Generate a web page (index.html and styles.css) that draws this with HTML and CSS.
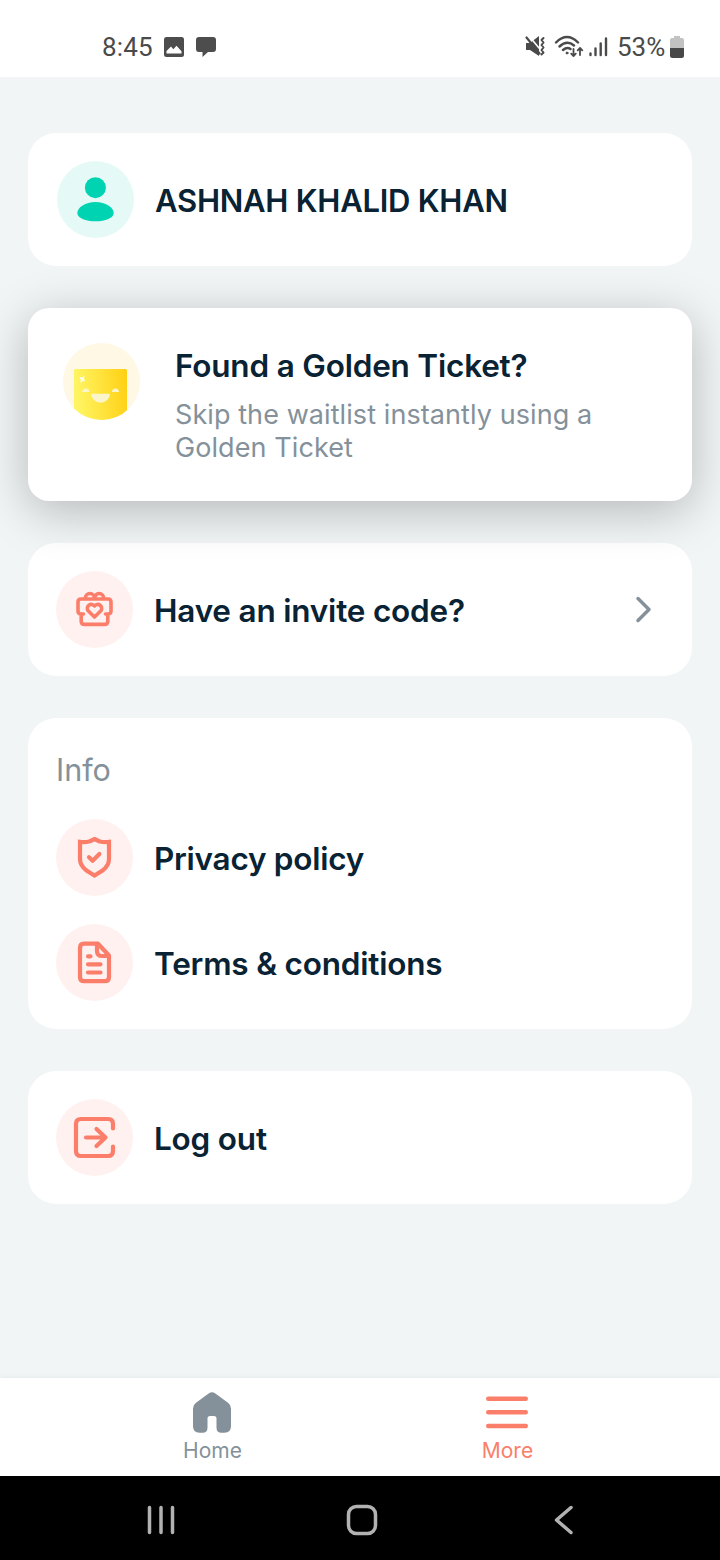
FILE: index.html
```html
<!DOCTYPE html>
<html lang="en">
<head>
<meta charset="utf-8">
<title>More</title>
<link rel="stylesheet" href="styles.css">
</head>
<body>
<div class="screen">
  <header class="status">
    <div class="status-left">
      <span class="clock">8:45</span>
      <svg class="st-photo" width="20" height="20" viewBox="0 0 20 20"><rect width="20" height="20" rx="2.500" fill="#4d4d4d"/><path d="M2.500 16.500v-2.500l4.500-4.500 2.300 2.800 3.200-3.500 5 5.500v2.200z" fill="#fff"/></svg>
      <svg class="st-chat" width="20" height="20" viewBox="0 0 20 20"><path d="M3 0h14q3 0 3 3v9q0 3-3 3h-5l-5.500 5v-5H3q-3 0-3-3V3q0-3 3-3z" fill="#4d4d4d"/></svg>
    </div>
    <div class="status-right">
      <svg width="84" height="24" viewBox="0 0 84 24" fill="none" stroke="#4a4a4a" stroke-width="2" stroke-linecap="round" stroke-linejoin="round">
        <path d="M1 8h4l9-7v20l-9-6H1z" fill="#4a4a4a" stroke="none"/>
        <path d="M4 1l10 12" stroke="#fff" stroke-width="1.600"/>
        <path d="M1.500 2.500l13 16" stroke-width="2.200"/>
        <path d="M18.500 3l-2 2 2 2.500-2 2.500 2 2.500-2 2.500 2 2.500-2 2" stroke-width="2"/>
        <path d="M31 7.500Q42-3.500 53 7.500M34.500 11.500Q42 4.500 49 10.500M38 15Q42 11.500 45.500 14" stroke-width="2.400"/>
        <circle cx="42" cy="18" r="1" fill="#4a4a4a" stroke-width="1"/>
        <path d="M48.500 14v7m-2.300-2.300l2.300 2.300 2.300-2.300M55 20v-7m-2.300 2.300L55 13l2.300 2.300" stroke-width="1.800"/>
        <path d="M65.500 18.500v1.500M70.500 13.500v6.500M75.700 8.500v11.500M81 3.500v16.500" stroke-width="2.400"/>
      </svg>
      <span class="percent">53%</span>
      <svg class="battery" width="14" height="22" viewBox="0 0 14 22"><path d="M4 0h6v2h2q2 0 2 2v8H0V4q0-2 2-2h2z" fill="#c2c2c2"/><path d="M0 12h14v7.500q0 2.500-2.500 2.500h-9Q0 22 0 19.500z" fill="#484848"/></svg>
    </div>
  </header>

  <main class="content">
    <section class="card row profile">
      <svg class="icon" viewBox="0 0 77 77"><circle cx="38.500" cy="38.500" r="38.500" fill="#e5faf7"/><circle cx="38.400" cy="26.700" r="10.500" fill="#00d3b2"/><path d="M38.500 41c10 0 18.200 5.500 18.200 11 0 5-8.200 8.300-18.200 8.300S20.300 57 20.300 52c0-5.500 8.200-11 18.200-11z" fill="#00d3b2"/></svg>
      <span class="title name">ASHNAH KHALID KHAN</span>
    </section>

    <section class="card golden">
      <svg class="icon" viewBox="0 0 77 77">
        <defs>
          <linearGradient id="gold" x1="0" y1="0.100" x2="1" y2="0"><stop offset="0" stop-color="#fff563"/><stop offset="1" stop-color="#ffd013"/></linearGradient>
          <clipPath id="disc"><circle cx="38.500" cy="38.500" r="38.500"/></clipPath>
        </defs>
        <circle cx="38.500" cy="38.500" r="38.500" fill="#fff8e5"/>
        <rect x="11" y="26" width="53" height="58" rx="1.500" fill="url(#gold)" clip-path="url(#disc)"/>
        <path d="M16.300 33.800l2.600.6 2.600-1.600-.6 3 1.300 2.400-2.500-.2-2.400 1.900.4-3z" fill="#fffde8"/>
        <path d="M19.300 49a3.500 3.500 0 0 1 7 0zM49 49a3.500 3.500 0 0 1 7 0zM28 50.700h19a9.500 9 0 0 1-19 0z" fill="#fbf5cb"/>
      </svg>
      <div class="golden-text">
        <span class="title found">Found a Golden Ticket?</span>
        <p class="sub">Skip the waitlist instantly using a<br>Golden Ticket</p>
      </div>
    </section>

    <section class="card row">
      <svg class="icon line" viewBox="0 0 77 77"><circle class="disc" cx="38.500" cy="38.500" r="38.500"/>
        <g stroke-width="3.600"><path d="M27.500 43H25Q22 43 22 40V31Q22 28 25 28H52Q55 28 55 31V40Q55 43 52 43H49.500M25.200 43V50.200Q25.200 53.400 28.400 53.400H48.600Q51.800 53.400 51.800 50.200V43M29.300 27.500a4.600 5 0 0 1 9.200 0a4.600 5 0 0 1 9.200 0"/><path d="M38.500 46l-6.400-6.200a4 4 0 0 1 6.400-4.800 4 4 0 0 1 6.400 4.800z"/></g></svg>
      <span class="title invite">Have an invite code?</span>
      <svg class="chevron" width="18" height="28" viewBox="0 0 18 28"><path d="M3 2.500L14 13.500 3 24.500" fill="none" stroke="#84919a" stroke-width="3.500" stroke-linecap="round" stroke-linejoin="round"/></svg>
    </section>

    <section class="card info">
      <h2>Info</h2>
      <div class="row">
        <svg class="icon line" viewBox="0 0 77 77"><circle class="disc" cx="38.500" cy="38.500" r="38.500"/><path class="shield" d="M38.500 20L43 22.200Q48 23.600 53 22.900V40Q53 46.500 46.500 51.500L38.500 56.500 30.500 51.500Q24 46.500 24 40V22.900Q29 23.600 34 22.200z"/><path d="M33 38.300l3.600 3.400 6.800-6.700"/></svg>
        <span class="title privacy">Privacy policy</span>
      </div>
      <div class="row">
        <svg class="icon line" viewBox="0 0 77 77"><circle class="disc" cx="38.500" cy="38.500" r="38.500"/><path d="M28 19.700H42L53 31.500V53Q53 57.200 49 57.200H28Q24 57.200 24 53V24Q24 19.700 28 19.700zM41 20.500V27Q41 32 46 32H53M32 32.300h2.500M32 40.300h12.500M32 48.500h12.500"/></svg>
        <span class="title terms">Terms &amp; conditions</span>
      </div>
    </section>

    <section class="card row">
      <svg class="icon line" viewBox="0 0 77 77"><circle class="disc" cx="38.500" cy="38.500" r="38.500"/><path d="M57 29.500V25Q57 20 52 20H25Q20 20 20 25V52Q20 57 25 57H52Q57 57 57 52V47.500M30 38.500H49.500M40.500 30l9 8.500-9 8.500"/></svg>
      <span class="title logout">Log out</span>
    </section>
  </main>

  <nav class="tabs">
    <div class="tab">
      <svg width="42" height="42" viewBox="0 0 42 42"><path d="M24 1.300L37 10.800Q40 13 40 16.500V34Q40 40.700 33.500 40.700H30.500Q25.500 40.700 25.500 35.700V26.500Q25.500 24 23 24H19Q16.500 24 16.500 26.500V35.700Q16.500 40.700 11.500 40.700H8.500Q2 40.700 2 34V16.500Q2 13 5 10.800L18 1.300Q21-1 24 1.300z" fill="#84919a"/></svg>
      <span class="label">Home</span>
    </div>
    <div class="tab active">
      <svg width="42" height="42" viewBox="0 0 42 42"><path d="M2.300 6.700H39.700M2.300 20.300H39.700M2.300 34H39.700" stroke="#fb7e6b" stroke-width="4.600" stroke-linecap="round"/></svg>
      <span class="label">More</span>
    </div>
  </nav>

  <footer class="system">
    <svg width="30" height="30" viewBox="0 0 30 30"><path d="M3.500 2.500v25M15 2.500v25M26.500 2.500v25"/></svg>
    <svg width="34" height="34" viewBox="0 0 34 34"><rect x="3.500" y="3.500" width="27" height="27" rx="8"/></svg>
    <svg width="30" height="30" viewBox="0 0 30 30"><path d="M23 2.500L8.500 15 23 27.500"/></svg>
  </footer>
</div>
</body>
</html>
```
FILE: styles.css
```css
* { box-sizing: border-box; }
body { margin: 0; font-family: Inter, "Liberation Sans", sans-serif; }
svg { display: block; flex: none; }
.screen { width: 720px; height: 1560px; display: flex; flex-direction: column; background: #f1f5f6; overflow: hidden; }

.status { height: 77px; padding: 17px 36px 0 102px; display: flex; justify-content: space-between; background: #fff; color: #4a4a4a; font: 400 26px/60px Roboto, sans-serif; }
.status-left, .status-right { display: flex; align-items: center; height: 60px; }
.clock { width: 62px; letter-spacing: 0.200px; }
.st-chat { margin-left: 12px; }
.percent { width: 53px; margin-left: 8.500px; font-size: 26px; }

.content { flex: 1; padding: 56px 28px 0; display: flex; flex-direction: column; gap: 42px; }
.card { background: #fff; border-radius: 28px; padding: 28px; }
.row { display: flex; align-items: center; gap: 21px; }
.icon { width: 77px; height: 77px; }
.line { fill: none; stroke: #fb7e6b; stroke-width: 4.200; stroke-linecap: round; stroke-linejoin: round; }
.shield { stroke-linejoin: miter; }
.disc { fill: #fff1f0; stroke: none; }
.title { font-size: 31.500px; line-height: 42px; font-weight: 600; letter-spacing: -0.200px; color: #092234; white-space: nowrap; padding-top: 3px; }
.profile { padding-left: 29px; }
.name { font-size: 31px; letter-spacing: -0.250px; }
.privacy { letter-spacing: -0.260px; }
.chevron { margin-left: auto; margin-right: 11px; }

.golden { z-index: 1; display: flex; gap: 35px; height: 193px; padding: 35px; border-radius: 21px; box-shadow: 0 10px 48px rgba(0, 0, 0, 0.250); }
.golden-text { display: flex; flex-direction: column; }
.found { padding-top: 2px; }
.sub { margin: 11px 0 0; font-size: 27px; line-height: 33px; letter-spacing: 0.080px; color: #84919a; white-space: nowrap; }

.info { height: 311px; display: flex; flex-direction: column; gap: 28px; }
.info h2 { margin: 0; padding-top: 3px; height: 45px; font-size: 30.500px; line-height: 42px; font-weight: 400; color: #84919a; }

.tabs { height: 98px; padding: 14px 66px 0 64px; display: flex; background: #fff; box-shadow: 0 -1px 5px rgba(0, 0, 0, 0.050); }
.tab { flex: 1; display: flex; flex-direction: column; align-items: center; gap: 4px; font-size: 21px; line-height: 26px; color: #84919a; }
.label { padding-left: 2px; }
.active { color: #fb7e6b; }

.system { height: 84px; padding: 4px 142px 0 146px; display: flex; align-items: center; justify-content: space-between; background: #000; }
.system svg { fill: none; stroke: #b2b2b2; stroke-width: 3.500; stroke-linecap: round; stroke-linejoin: round; }
```
